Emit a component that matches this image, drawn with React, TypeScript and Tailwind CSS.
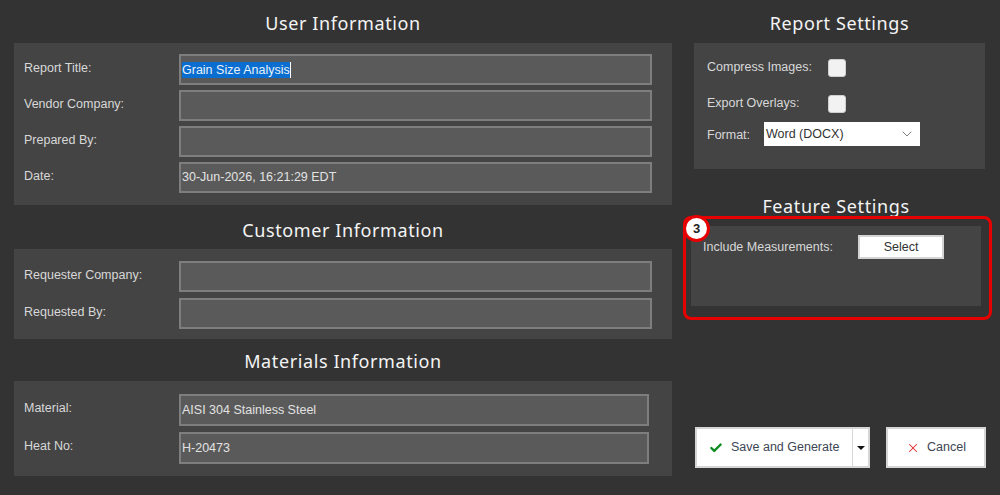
import { Check, X, ChevronDown } from "lucide-react";

const Heading = ({ children, className = "" }: { children: string; className?: string }) => (
  <h2 className={`text-center text-[18px] leading-[24px] tracking-[0.6px] text-[#f4f4f4] font-['Noto_Sans',sans-serif] ${className}`}>
    {children}
  </h2>
);

const Row = ({ label, value, h = "h-[31px]", children }: { label: string; value?: string; h?: string; children?: React.ReactNode }) => (
  <div className="flex items-center">
    <div className="w-[165px] pl-[10px] -mt-[3px] text-[#d8d8d8]">{label}</div>
    <div className={`${h} flex-1 flex items-center border-2 border-[#7e7e7e] bg-[#5a5a5a] pl-[1px] text-[#e2e2e2]`}>
      {children ?? value}
    </div>
  </div>
);

export default function App() {
  return (
    <div className="w-[1000px] h-[495px] overflow-hidden bg-[#333333] flex font-['Liberation_Sans',sans-serif] text-[12.5px]">
      <div className="w-[658px] ml-[14px] flex flex-col">
        <Heading className="pt-[11px] pb-[8px]">User Information</Heading>
        <div className="bg-[#444444] h-[162px] pt-[11px] pr-[20px] flex flex-col gap-[5px]">
          <Row label="Report Title:">
            <span className="bg-[#0a6dd0] text-[#e8f2fb] leading-[16px] border-r border-white">Grain Size Analysis</span>
          </Row>
          <Row label="Vendor Company:" />
          <Row label="Prepared By:" />
          <Row label="Date:" value="30-Jun-2026, 16:21:29 EDT" />
        </div>
        <Heading className="pt-[13px] pb-[7px]">Customer Information</Heading>
        <div className="bg-[#444444] h-[90px] pt-[12px] pr-[20px] flex flex-col gap-[6px]">
          <Row label="Requester Company:" />
          <Row label="Requested By:" />
        </div>
        <Heading className="pt-[10px] pb-[8px]">Materials Information</Heading>
        <div className="bg-[#444444] h-[95px] pt-[13px] pr-[23px] flex flex-col gap-[6px]">
          <Row label="Material:" h="h-[32px]" value="AISI 304 Stainless Steel" />
          <Row label="Heat No:" h="h-[32px]" value="H-20473" />
        </div>
      </div>

      <div className="w-[328px] flex flex-col">
        <div className="ml-[22px] w-[291px]">
          <Heading className="pt-[11px] pb-[8px]">Report Settings</Heading>
          <div className="bg-[#444444] h-[126px] pl-[13px] pt-[15px] text-[#d8d8d8]">
            <div className="flex items-center h-[20px]">
              <span className="w-[122px] -mt-[1px]">Compress Images:</span>
              <span className="w-[18px] h-[18px] rounded-[3px] bg-[#f2f2f2] border border-[#cfcfcf] -ml-[1px]" />
            </div>
            <div className="flex items-center h-[20px] mt-[16px]">
              <span className="w-[122px] -mt-[1px]">Export Overlays:</span>
              <span className="w-[18px] h-[18px] rounded-[3px] bg-[#f2f2f2] border border-[#cfcfcf] -ml-[1px]" />
            </div>
            <div className="flex items-center mt-[9px]">
              <span className="w-[57px] mt-[2px]">Format:</span>
              <div className="w-[156px] h-[24px] bg-white flex items-center justify-between pl-[2px] pr-[5px] text-[#333333] -mt-[1px]">
                <span>Word (DOCX)</span>
                <ChevronDown size={16} strokeWidth={1.25} className="text-[#666666]" />
              </div>
            </div>
          </div>
        </div>

        <Heading className="pt-[25px] ml-[19px] w-[290px] pb-[0px]">Feature Settings</Heading>
        <div className="relative mt-[-2px] ml-[11px] w-[309px] h-[104px] rounded-[8px] border-[3px] border-[#e60000] pl-[5px] pt-[7px]">
          <div className="w-[290px] h-[80px] bg-[#444444] pl-[12px] pt-[9px] flex items-start text-[#d8d8d8]">
            <span className="w-[155px] mt-[3px]">Include Measurements:</span>
            <div className="w-[86px] h-[24px] bg-white border-2 border-[#d4d4d4] flex items-center justify-center text-[#333333]">
              Select
            </div>
          </div>
          <div className="absolute -left-[3px] -top-[4px] w-[27px] h-[27px] rounded-full bg-white border-[3px] border-[#e60000] flex items-center justify-center text-[13px] font-bold text-[#222222]">
            3
          </div>
        </div>

        <div className="mt-[107px] ml-[23px] flex">
          <div className="flex h-[41px] w-[175px] bg-white border-2 border-[#d6d6d6] text-[#3d4654]">
            <div className="w-[155px] flex items-center pl-[12px]">
              <Check size={14} strokeWidth={4} className="text-[#0b8a1e] mr-[8px]" />
              <span>Save and Generate</span>
            </div>
            <div className="w-[1px] bg-[#d6d6d6]" />
            <div className="flex-1 flex items-center justify-center">
              <span className="w-0 h-0 border-x-[4px] border-x-transparent border-t-[4px] border-t-[#111111]" />
            </div>
          </div>
          <div className="flex h-[41px] w-[100px] ml-[16px] bg-white border-2 border-[#d6d6d6] items-center pl-[18px] text-[#3d4654]">
            <X size={14} strokeWidth={1.75} className="text-[#d42c2c] mr-[7px]" />
            <span>Cancel</span>
          </div>
        </div>
      </div>
    </div>
  );
}
